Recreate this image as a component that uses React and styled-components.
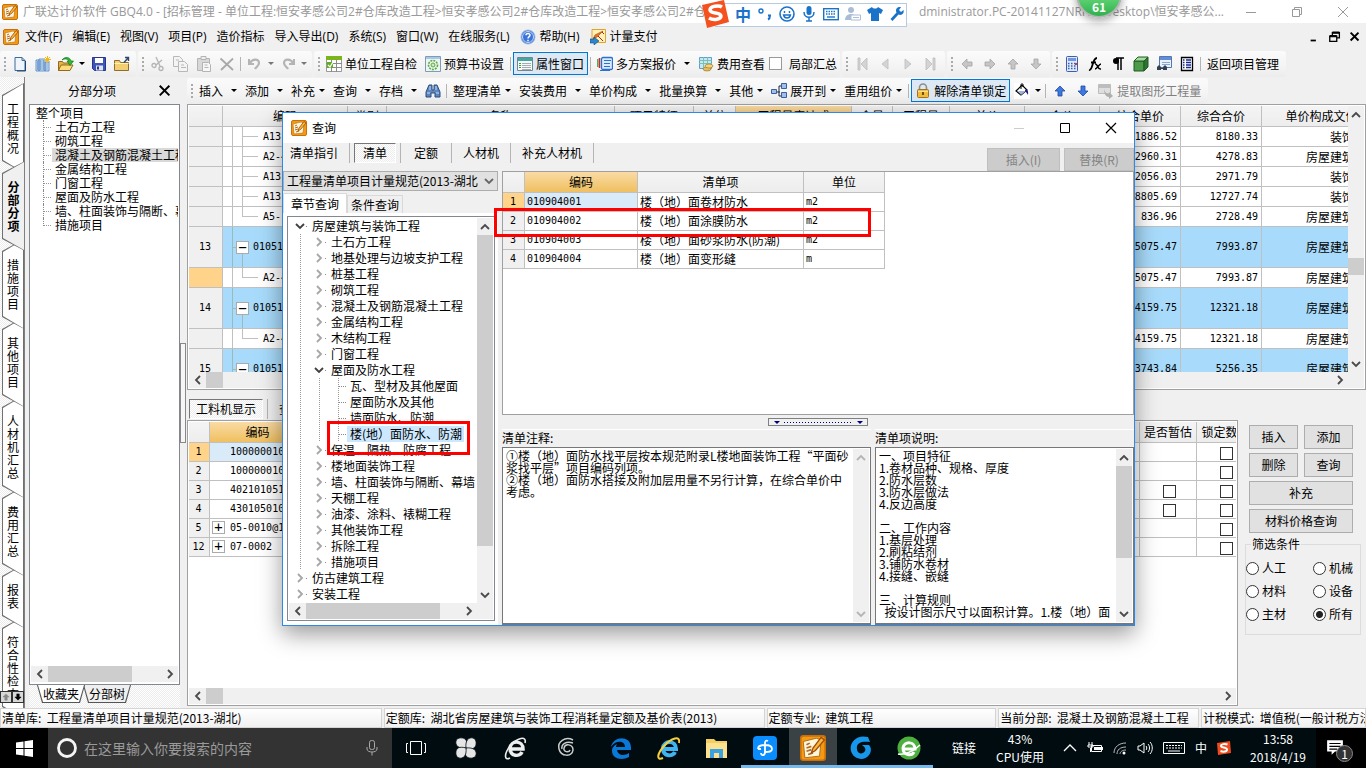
import React, { useState } from "react";
import styled, { createGlobalStyle, css } from "styled-components";

const I = ({ s = 16, children, ...rest }) => (
  <svg width={s} height={s} viewBox="0 0 16 16" fill="none" aria-hidden="true" {...rest}>
    {children}
  </svg>
);

const BookIcon = ({ s }) => (
  <I s={s}>
    <rect x=".5" y=".5" width="15" height="15" rx="1.5" fill="#f39a12" stroke="#c9700a" />
    <path d="M2 4 10 2l3 1-1 10-9 1z" fill="#fff6dc" stroke="#b56a1a" strokeWidth=".6" />
    <path d="M4 6l2-1M4 8l3-1M4 10l3-1M5 12l3-1" stroke="#b06a28" />
    <path d="M13 1.500 8 8l-1 3 2.500-1.500L15 3z" fill="#f5b73a" stroke="#a04a08" strokeWidth=".8" />
  </I>
);
const NewIcon = () => (
  <I>
    <path d="M3 1.500h7l3 3v10H3z" fill="#eef5fc" stroke="#3d6a98" />
    <path d="M10 1.500v3h3" stroke="#3d6a98" />
    <path d="M13.500 5v10H5" stroke="#23466e" />
  </I>
);
const BuildIcon = () => (
  <I>
    <path d="M1 4h3v11H1zM4 3h6v12H4zM10 6h4v9h-4z" fill="#cfe2f7" stroke="#4a7fbe" strokeWidth=".8" />
    <path d="M5.500 4v10M7 4v10M8.500 4v10M2.500 5v9M12 7v7" stroke="#5a8cc6" strokeWidth=".7" />
    <path d="M12.500 0v7M9 3.500h7M10 1l5 5M15 1l-5 5" stroke="#f2b818" />
  </I>
);
const OpenIcon = () => (
  <I>
    <path d="M.5 14.500v-9h4l1 1.500h6v7.500z" fill="#e4b448" stroke="#94681a" />
    <path d="M.5 14.500 3 9h12l-3 5.500z" fill="#fbdc7c" stroke="#94681a" />
    <path d="M4 4c3-4 8-3 9 1h2.500L12 9.500 9 5h2C10 3 7 2 4 4z" fill="#34b934" stroke="#0d7a17" strokeWidth=".7" />
  </I>
);
const SaveIcon = () => (
  <I>
    <path d="M1.500 1.500h13v13h-11l-2-2z" fill="#3f55b8" stroke="#26378a" />
    <path d="M4 2h8v5H4z" fill="#fff" />
    <path d="M5 9.500h7v5H5z" fill="#dde4f4" />
    <path d="M6 10.500h2v3H6z" fill="#26378a" />
  </I>
);
const FolderIcon = () => (
  <I>
    <path d="M.5 14.500v-10h5l1 2h8v8z" fill="#f2cf73" stroke="#8f6d2a" />
    <path d="M.5 7.500h14" stroke="#fff1b8" />
    <path d="M10 6.500 14 2M11 1.500h3.500V5" stroke="#304a6e" strokeWidth="1.400" />
  </I>
);
const CutIcon = () => (
  <I stroke="#b4b4b4" strokeWidth="1.300">
    <path d="M6 1l4 9M12 4 6 9" />
    <circle cx="4" cy="9.500" r="2" />
    <circle cx="11" cy="12.500" r="2" />
  </I>
);
const CopyIcon = () => (
  <I stroke="#b8b8b8">
    <path d="M.5.500h6l3 3v7h-9z" fill="#f4f4f4" />
    <path d="M5.500 5.500h6l3 3v7h-9zM8 9h3M8 11.500h5M3 4h3" fill="#f4f4f4" />
  </I>
);
const PasteIcon = () => (
  <I stroke="#b4b4b4">
    <path d="M1.500 2.500h12v12h-12z" fill="#d8d8d8" />
    <path d="M5 .500h5v3H5z" fill="#eee" />
    <path d="M6.500 6.500h6l2 2v7h-8zM8.500 9h3M8.500 11.500h4" fill="#f7f7f7" />
  </I>
);
const DelIcon = () => (
  <I>
    <path d="M1.500 2.500 14 14M14 2.500 2 14" stroke="#a9a9a9" strokeWidth="1.800" />
  </I>
);
const UndoIcon = ({ flip }) => (
  <I>
    <g transform={flip ? "translate(16 0) scale(-1 1)" : undefined}>
      <path d="M2 3v5h5" stroke="#b4b4b4" strokeWidth="2" />
      <path d="M3 7c2-4 9-5 9 0 0 3-3 4-4 6" stroke="#b4b4b4" strokeWidth="2.200" />
    </g>
  </I>
);
const CheckTableIcon = () => (
  <I>
    <path d="M.5.500h15v15H.5z" fill="#fff" stroke="#999" />
    <path d="M0 0h16v4H0z" fill="#7ab51d" />
    <path d="M0 7.500h16M0 11.500h16M5.500 4v12M10.500 4v12" stroke="#8b8b8b" />
    <path d="M1 6h6v6H1z" fill="#5fae20" />
    <path d="M2 9l2 2 3-5" stroke="#fff" strokeWidth="1.300" />
  </I>
);
const GearIcon = () => (
  <I>
    <path d="M.5.500h15v15H.5z" fill="#eef5ee" stroke="#7c9cba" />
    <path d="M1 1h14v2H1z" fill="#a9c8e8" />
    <circle cx="8" cy="9" r="4.500" stroke="#5aa94a" strokeWidth="1.600" strokeDasharray="2 1" />
    <circle cx="8" cy="9" r="2" fill="#cfe9c8" stroke="#5aa94a" />
  </I>
);
const PropIcon = () => (
  <I>
    <path d="M.5 1.500h15v13H.5z" fill="#f8faf8" stroke="#6d8794" />
    <path d="M1 2h14v3H1z" fill="#43a6a0" />
    <path d="M2 7.500h2M2 9.500h2M2 11.500h2" stroke="#3aa050" />
    <path d="M5 7.500h9M5 9.500h9M5 11.500h9M5 13.500h9" stroke="#a4acb0" />
  </I>
);
const PlanIcon = () => (
  <I>
    <path d="M2.500 2v10" stroke="#d22" strokeWidth="1.500" />
    <path d="M.8 3v8" stroke="#2a9a3a" strokeWidth="1.200" />
    <rect x="4.500" y="1.500" width="11" height="12" rx="1.500" fill="#d8ebff" stroke="#2b72cf" strokeWidth="1.300" />
    <path d="M7 4.500h7M7 7.500h6M7 10.500h6" stroke="#2b72cf" strokeWidth="1.200" />
    <path d="M3 14.500h10" stroke="#2b72cf" />
  </I>
);
const FeeIcon = () => (
  <I>
    <path d="M1.500 1.500h12v11h-12z" fill="#c5e7f8" stroke="#5ba0cf" />
    <path d="M1 4.500h13M1 7.500h13M5.500 1v11M9.500 1v11" stroke="#7cc0b0" />
    <ellipse cx="9" cy="13" rx="4" ry="2" fill="#e6bd5e" stroke="#a57a22" strokeWidth=".7" />
    <ellipse cx="11" cy="10" rx="4" ry="2" fill="#f3d27e" stroke="#a57a22" strokeWidth=".7" />
  </I>
);
const NavIcon = ({ d }) => (
  <I>
    <path d={d} fill="#d4d4d4" stroke="#bcbcbc" strokeWidth=".8" />
  </I>
);
const ArrowIcon = ({ turn = 0, fill = "#c6c6c6", stroke = "#a3a3a3" }) => (
  <I>
    <path
      transform={`rotate(${turn} 8 8)`}
      d="M8 3 13 8h-3v5H6V8H3z"
      fill={fill}
      stroke={stroke}
      strokeWidth=".8"
    />
  </I>
);
const CalcIcon = () => (
  <I>
    <rect x="2.500" y=".5" width="11" height="15" rx="1" fill="#dfe9fa" stroke="#3a5fae" />
    <path d="M4 2h8v3H4z" fill="#6f96de" />
    <path d="M4 7.500h8M4 10h8M4 12.500h8" stroke="#3a5fae" strokeWidth="1.400" strokeDasharray="1.500 1.500" />
    <path d="M11 7h2v2h-2z" fill="#d33" />
  </I>
);
const CubeIcon = () => (
  <I>
    <path d="M1 5h10v10H1z" fill="#4d9a48" stroke="#1e5c22" />
    <path d="M1 5 5 1h10l-4 4z" fill="#a8dba0" stroke="#1e5c22" />
    <path d="M11 5l4-4v10l-4 4z" fill="#2f7432" stroke="#1e5c22" />
  </I>
);
const FindTableIcon = () => (
  <I>
    <path d="M3.500.500h12v11h-12z" fill="#e8f1fc" stroke="#5577aa" />
    <path d="M4 1h11v3H4z" fill="#5f8edb" />
    <path d="M6 6.500h8M6 8.500h8" stroke="#8aa7cf" />
    <path d="M1 11l2-2 2 2v3H1zM7 11l2-2 2 2v3H7z" fill="#33404f" />
    <path d="M4 12.500h4" stroke="#33404f" />
  </I>
);
const ListIcon = () => (
  <I>
    <path d="M2.500 1.500h11v13h-11z" fill="#fff" stroke="#000" strokeWidth="1.300" />
    <path d="M4 4h1.500M4 6.500h1.500M4 9h1.500M4 11.500h1.500M7 4h5M7 6.500h5M7 9h5M7 11.500h5" stroke="#1b2a8f" strokeWidth="1.300" />
  </I>
);
const BinocIcon = () => (
  <I>
    <path d="M1 9 4 2h3v5h2V2h3l3 7v5h-5v-4H6v4H1z" fill="#5c86bd" stroke="#2a4d7e" />
    <path d="M2 10h3M11 10h3M5 3v4M11 3v4" stroke="#c7dcf5" />
  </I>
);
const ExpandIcon = () => (
  <I>
    <path d="M4 9h5M8 3v10M8 3h3M8 13h3" stroke="#223" />
    <path d="M.5 6.500h5v4h-5zM10.500.500h5v5h-5zM10.500 9.500h5v5h-5z" fill="#9fc0ea" stroke="#3a5f9c" />
  </I>
);
const LockIcon = () => (
  <I>
    <path d="M4.500 7V4.500a3.500 3.500 0 0 1 7 0V7" stroke="#8d8d8d" strokeWidth="1.600" />
    <rect x="2.500" y="6.500" width="11" height="8" rx="1" fill="#f2bd3f" stroke="#a8721a" />
    <path d="M3 8.500h10" stroke="#fbe29a" />
    <path d="M8 9v3" stroke="#4d3508" strokeWidth="1.600" />
  </I>
);
const BucketIcon = () => (
  <I>
    <path d="M0 0h16v16H0z" fill="#fff" />
    <path d="M2 8l6-6 5 5-6 5z" fill="#fff" stroke="#000" strokeWidth="1.200" />
    <path d="M4 8h8l-5 4z" fill="#9bb4d9" />
    <path d="M7 6V1.500c0-1 2-1 2 0V4" stroke="#000" />
    <path d="M12 6c2 1 2.500 3 2 6-1-2-2-3-3-4z" fill="#1b1b7a" />
  </I>
);
const ExtractIcon = () => (
  <I>
    <path d="M.5 1.500h12v9H.5z" fill="#dedede" stroke="#bdbdbd" />
    <path d="M1 2h11v3H1z" fill="#bdbdbd" />
    <path d="M6 6c1 4 3 5 5 5V9l4 4-4 3v-2c-3 0-5-3-5-8z" fill="#b0b0b0" />
  </I>
);
const HelpIcon = () => (
  <I>
    <circle cx="8" cy="8" r="7" fill="#3b74d8" stroke="#9db8e6" />
    <circle cx="8" cy="8" r="5.500" stroke="#e3edff" strokeWidth=".8" />
    <path d="M6 6.300C6 3.800 10.200 4 10 6.300 9.900 7.600 8 7.700 8 9.500M8 10.800v1.400" stroke="#fff" strokeWidth="1.500" />
  </I>
);
const PayIcon = () => (
  <I>
    <path d="M2 .500h13.500v13H2z" fill="#fff0b8" stroke="#e2a32a" />
    <path d="M13 2 7 8l-4 2 2-4z" fill="#e87722" stroke="#a63d0a" strokeWidth=".6" />
    <path d="M8 7l5 5M12 3l2 2" stroke="#b0261a" />
    <path d="M0 10h4V8l5 4-5 4v-2H0z" fill="#2b86cf" stroke="#0d4d86" strokeWidth=".6" />
  </I>
);
const Chevron = ({ dir = "right", color = "#4a4a4a" }) => {
  const turn = { right: 0, down: 90, left: 180, up: 270 }[dir];
  return (
    <svg width="10" height="10" viewBox="0 0 10 10" fill="none" aria-hidden="true">
      <path d="M3 1 7 5 3 9" transform={`rotate(${turn} 5 5)`} stroke={color} strokeWidth="1.800" />
    </svg>
  );
};

const menus = [
  { label: "文件(F)" },
  { label: "编辑(E)" },
  { label: "视图(V)" },
  { label: "项目(P)" },
  { label: "造价指标" },
  { label: "导入导出(D)" },
  { label: "系统(S)" },
  { label: "窗口(W)" },
  { label: "在线服务(L)" },
  { label: "帮助(H)", icon: <HelpIcon /> },
  { label: "计量支付", icon: <PayIcon /> },
];

const sideTabs = ["工程概况", "分部分项", "措施项目", "其他项目", "人材机汇总", "费用汇总", "报表", "符合性检查"];

const parts = [
  "土石方工程",
  "砌筑工程",
  "混凝土及钢筋混凝土工程",
  "金属结构工程",
  "门窗工程",
  "屋面及防水工程",
  "墙、柱面装饰与隔断、幕墙",
  "措施项目",
];

const mainCols = [
  ["编码", 125],
  ["类别", 39],
  ["名称", 228],
  ["项目特征", 79],
  ["单位", 42],
  ["工程量表达式", 116],
  ["含量", 41],
  ["工程量", 57],
  ["单价", 75],
  ["合价", 75],
  ["综合单价", 81],
  ["综合合价", 81],
  ["单价构成文件", 120],
];

const mainRows = [
  { code: "A13-1", price: "1886.52", total: "8180.33", file: "装饰工程" },
  { code: "A2-4", price: "2960.31", total: "4278.83", file: "房屋建筑工程" },
  { code: "A13-1", price: "2056.03", total: "2971.79", file: "装饰工程" },
  { code: "A13-1", price: "8805.69", total: "12727.74", file: "装饰工程" },
  { code: "A5-", price: "836.96", total: "2728.49", file: "房屋建筑工程", last: true },
  { no: 13, code: "010514", price: "5075.47", total: "7993.87", file: "房屋建筑工程" },
  { code: "A2-4", price: "5075.47", total: "7993.87", file: "房屋建筑工程", last: true, current: true },
  { no: 14, code: "010515", price: "4159.75", total: "12321.18", file: "房屋建筑工程" },
  { code: "A2-4", price: "4159.75", total: "12321.18", file: "房屋建筑工程", last: true },
  { no: 15, code: "010515", price: "3743.84", total: "5256.35", file: "房屋建筑工程" },
];

const resRows = [
  { no: 1, code: "100000010" },
  { no: 2, code: "100000010" },
  { no: 3, code: "402101051", est: true },
  { no: 4, code: "430105010", est: true },
  { no: 5, code: "05-0010@1", plus: true },
  { no: 12, code: "07-0002", plus: true },
];

const chapters = [
  [0, "房屋建筑与装饰工程", "open"],
  [1, "土石方工程"],
  [1, "地基处理与边坡支护工程"],
  [1, "桩基工程"],
  [1, "砌筑工程"],
  [1, "混凝土及钢筋混凝土工程"],
  [1, "金属结构工程"],
  [1, "木结构工程"],
  [1, "门窗工程"],
  [1, "屋面及防水工程", "open"],
  [2, "瓦、型材及其他屋面"],
  [2, "屋面防水及其他"],
  [2, "墙面防水、防潮"],
  [2, "楼(地）面防水、防潮"],
  [1, "保温、隔热、防腐工程"],
  [1, "楼地面装饰工程"],
  [1, "墙、柱面装饰与隔断、幕墙"],
  [1, "天棚工程"],
  [1, "油漆、涂料、裱糊工程"],
  [1, "其他装饰工程"],
  [1, "拆除工程"],
  [1, "措施项目"],
  [0, "仿古建筑工程"],
  [0, "安装工程"],
];

const items = [
  ["010904001", "楼（地）面卷材防水", "m2"],
  ["010904002", "楼（地）面涂膜防水", "m2"],
  ["010904003", "楼（地）面砂浆防水(防潮)", "m2"],
  ["010904004", "楼（地）面变形缝", "m"],
];

const noteText = `①楼（地）面防水找平层按本规范附录L楼地面装饰工程“平面砂浆找平层”项目编码列项。
②楼（地）面防水搭接及附加层用量不另行计算，在综合单价中考虑。`;

const descText = `一、项目特征
1.卷材品种、规格、厚度
2.防水层数
3.防水层做法
4.反边高度

二、工作内容
1.基层处理
2.刷粘结剂
3.铺防水卷材
4.接缝、嵌缝

三、计算规则
  按设计图示尺寸以面积计算。1.楼（地）面`;

const Scroll = ({ vertical, at = 0, len, idle }) => {
  const color = idle ? "#b5b5b5" : "#4a4a4a";
  return (
    <ScrollBar $vertical={vertical}>
      <ScrollEnd $vertical={vertical}>
        <Chevron dir={vertical ? "up" : "left"} color={color} />
      </ScrollEnd>
      <Track $vertical={vertical}>{len && <Thumb $vertical={vertical} $at={at} $len={len} />}</Track>
      <ScrollEnd $vertical={vertical}>
        <Chevron dir={vertical ? "down" : "right"} color={color} />
      </ScrollEnd>
    </ScrollBar>
  );
};

const Tool = ({ icon, label }) => (
  <ToolButton type="button" aria-label={label}>
    {icon}
  </ToolButton>
);

const MenuTool = ({ label, split, icon }) => (
  <DropButton type="button" $split={split}>
    {icon}
    {label}
    <Caret />
  </DropButton>
);

const TopBars = () => (
  <header>
    <TitleBar>
      <BookIcon />
      <TitleText>
        广联达计价软件 GBQ4.0 - [招标管理 - 单位工程:恒安孝感公司2#仓库改造工程&gt;恒安孝感公司2#仓库改造工程&gt;恒安孝感公司2#仓库
      </TitleText>
      <TitlePath>dministrator.PC-20141127NRHD\Desktop\恒安孝感公...</TitlePath>
      <WinButton type="button" aria-label="最小化">
        <I><path d="M3 8.500h10" stroke="#999" /></I>
      </WinButton>
      <WinButton type="button" aria-label="还原">
        <I><path d="M3.500 5.500h7v7h-7zM5.500 5V3.500h7v7H11" stroke="#999" /></I>
      </WinButton>
      <WinButton type="button" aria-label="关闭">
        <I><path d="M3 3l10 10M13 3 3 13" stroke="#999" /></I>
      </WinButton>
    </TitleBar>
    <MenuBar>
      <BookIcon />
      {menus.map((m) => (
        <MenuItem key={m.label} type="button">
          {m.icon}
          {m.label}
        </MenuItem>
      ))}
      <Grow />
      <MdiButtons>
        <I s={14}><path d="M3 11h6v2H3z" fill="#000" /></I>
        <I s={14}><path d="M2 7h8v6H2zM5 6V3h8v6h-3" stroke="#000" strokeWidth="1.500" /><path d="M2 7h8M5 3h8" stroke="#000" strokeWidth="2.500" /></I>
        <I s={14}><path d="M3 3l9 9M12 3l-9 9" stroke="#000" strokeWidth="2.200" /></I>
      </MdiButtons>
    </MenuBar>
    <ToolBar>
      <Group>
        <Grip />
        <Tool icon={<NewIcon />} label="新建" />
        <Tool icon={<BuildIcon />} label="新建项目" />
        <Tool icon={<OpenIcon />} label="打开" />
        <CaretBox><Caret /></CaretBox>
        <Tool icon={<SaveIcon />} label="保存" />
        <Tool icon={<FolderIcon />} label="另存" />
      </Group>
      <Group>
        <Grip />
        <Tool icon={<CutIcon />} label="剪切" />
        <Tool icon={<CopyIcon />} label="复制" />
        <Tool icon={<PasteIcon />} label="粘贴" />
        <Tool icon={<DelIcon />} label="删除" />
        <Sep />
        <Tool icon={<UndoIcon />} label="撤销" />
        <CaretBox><Caret $dim /></CaretBox>
        <Tool icon={<UndoIcon flip />} label="恢复" />
        <CaretBox><Caret $dim /></CaretBox>
      </Group>
      <Group>
        <Grip />
        <TextButton type="button"><CheckTableIcon />单位工程自检</TextButton>
        <TextButton type="button"><GearIcon />预算书设置</TextButton>
        <Sep />
        <TextButton type="button" $pressed><PropIcon />属性窗口</TextButton>
        <Sep />
        <DropButton type="button" $split><PlanIcon />多方案报价<Caret /></DropButton>
        <TextButton type="button"><FeeIcon />费用查看</TextButton>
        <CheckLabel>
          <Check type="checkbox" $pale />
          局部汇总
        </CheckLabel>
      </Group>
      <Group>
        <Grip />
        <Tool label="首条" icon={<NavIcon d="M4 2h2v12H4zM13 2v12L7 8z" />} />
        <Tool label="上一条" icon={<NavIcon d="M11 3v10L5 8z" />} />
        <Tool label="下一条" icon={<NavIcon d="M5 3v10l6-5z" />} />
        <Tool label="末条" icon={<NavIcon d="M10 2h2v12h-2zM3 2v12l6-6z" />} />
      </Group>
      <Group>
        <Grip />
        <Tool label="左移" icon={<ArrowIcon turn={-90} />} />
        <Tool label="右移" icon={<ArrowIcon turn={90} />} />
        <Tool label="上移" icon={<ArrowIcon />} />
        <Tool label="下移" icon={<ArrowIcon turn={180} />} />
      </Group>
      <Group>
        <Grip />
        <Tool label="计算器" icon={<CalcIcon />} />
        <Tool
          label="函数"
          icon={<I><path d="M2 14c4 1 3-12 8-12M4 6.500h5" stroke="#000" strokeWidth="1.800" /><path d="M8 8c3-1 2 6 6 5M14 8c-2 0-4 5-6 5" stroke="#000" strokeWidth="1.500" /></I>}
        />
        <Tool
          label="特殊符号"
          icon={<I><path d="M8 2v12M11 2v12M6 2h8" stroke="#000" strokeWidth="1.500" /><circle cx="6" cy="5" r="3" fill="#000" /></I>}
        />
        <Tool label="图元" icon={<CubeIcon />} />
        <Tool label="查找" icon={<FindTableIcon />} />
        <Tool label="列表" icon={<ListIcon />} />
        <Sep />
        <TextButton type="button">返回项目管理</TextButton>
      </Group>
    </ToolBar>
  </header>
);

const MainGrid = () => (
  <GridFrame $tall>
    <GridView>
      <Table>
        <colgroup>
          <col width="34" />
          {mainCols.map(([name, w]) => (
            <col key={name} width={w} />
          ))}
        </colgroup>
        <thead>
          <tr>
            <Th />
            {mainCols.map(([name]) => (
              <Th key={name} $hot={name === "工程量表达式"}>{name}</Th>
            ))}
          </tr>
        </thead>
        <tbody>
          {mainRows.map((r, i) => (
            <Tr key={i} $blue={r.no} $h={r.no ? 41 : 20}>
              <RowHead $hot={r.current}>{r.no}</RowHead>
              {r.no ? (
                <ParentCell>
                  <Toggle>−</Toggle>
                  {r.code}
                </ParentCell>
              ) : (
                <LeafCell $last={r.last}>{r.code}</LeafCell>
              )}
              {mainCols.slice(1, 10).map(([name]) => (
                <Td key={name} />
              ))}
              <NumCell>{r.price}</NumCell>
              <NumCell>{r.total}</NumCell>
              <Td $right>{r.file}</Td>
            </Tr>
          ))}
        </tbody>
      </Table>
    </GridView>
    <Scroll vertical at={135} len={17} />
    <Scroll at={0} len={17} />
    <Corner />
  </GridFrame>
);

const ResourceGrid = () => (
  <GridFrame>
    <GridView>
      <Table>
        <colgroup>
          <col width="21" />
          <col width="96" />
          <col width="834" />
          <col width="57" />
          <col width="58" />
        </colgroup>
        <thead>
          <tr>
            <Th />
            <Th $hot>编码</Th>
            <Th />
            <Th>是否暂估</Th>
            <Th>锁定数量</Th>
          </tr>
        </thead>
        <tbody>
          {resRows.map((r) => (
            <Tr key={r.no} $h={19}>
              <RowHead $hot={r.no === 1}>{r.no}</RowHead>
              <CodeCell $hot={r.no === 1}>
                <CodeLine>
                  <ToggleSlot>{r.plus && <Toggle>+</Toggle>}</ToggleSlot>
                  {r.code}
                </CodeLine>
              </CodeCell>
              <Td />
              <Td $center>{r.est && <Check type="checkbox" aria-label="是否暂估" />}</Td>
              <Td $center><Check type="checkbox" aria-label="锁定数量" /></Td>
            </Tr>
          ))}
        </tbody>
      </Table>
    </GridView>
    <HSpan><Scroll at={0} len={17} /></HSpan>
  </GridFrame>
);

const FilterBox = () => {
  const [kind, setKind] = useState("所有");
  return (
    <Fieldset>
      <legend>筛选条件</legend>
      {["人工", "机械", "材料", "设备", "主材", "所有"].map((k) => (
        <RadioLabel key={k}>
          <Radio type="radio" name="kind" checked={kind === k} onChange={() => setKind(k)} />
          {k}
        </RadioLabel>
      ))}
    </Fieldset>
  );
};

const QueryDialog = () => (
  <Dialog role="dialog" aria-label="查询">
    <DialogTitle>
      <BookIcon />
      <span>查询</span>
      <Grow />
      <WinButton type="button" aria-label="最小化">
        <I><path d="M3 8.500h10" stroke="#ccc" /></I>
      </WinButton>
      <WinButton type="button" aria-label="最大化">
        <I><path d="M3.500 3.500h9v9h-9z" stroke="#000" /></I>
      </WinButton>
      <WinButton type="button" aria-label="关闭">
        <I><path d="M3 3l10 10M13 3 3 13" stroke="#000" strokeWidth="1.200" /></I>
      </WinButton>
    </DialogTitle>
    <DialogBar>
      {["清单指引", "清单", "定额", "人材机", "补充人材机"].map((t) => (
        <React.Fragment key={t}>
          <ModeButton type="button" $pressed={t === "清单"}>{t}</ModeButton>
          <Sep $tall />
        </React.Fragment>
      ))}
      <Grow />
      <GreyButton type="button" disabled>插入(I)</GreyButton>
      <GreyButton type="button" disabled>替换(R)</GreyButton>
    </DialogBar>
    <DialogBody>
      <DialogLeft>
        <SelectWrap>
          <Select aria-label="清单规范" defaultValue="hb">
            <option value="hb">工程量清单项目计量规范(2013-湖北</option>
          </Select>
          <Chevron dir="down" color="#666" />
        </SelectWrap>
        <PageTabs>
          <PageTab type="button" $active>章节查询</PageTab>
          <PageTab type="button">条件查询</PageTab>
        </PageTabs>
        <TreePage>
          <TreeFrame>
            <ChapterList>
              {chapters.map(([level, name, state]) => (
                <Chapter key={name} $level={level}>
                  {level < 2 && (
                    <Chevron dir={state ? "down" : "right"} color={state ? "#404040" : "#a6a6a6"} />
                  )}
                  <Dots $leaf={level === 2} />
                  <ChapterName $active={name === chapters[13][1]}>{name}</ChapterName>
                </Chapter>
              ))}
            </ChapterList>
            <Scroll vertical at={0} len={311} />
            <Scroll at={0} len={134} />
            <Corner />
          </TreeFrame>
        </TreePage>
      </DialogLeft>
      <DialogRight>
        <ItemArea>
          <Table>
            <colgroup>
              <col width="22" />
              <col width="113" />
              <col width="166" />
              <col width="81" />
            </colgroup>
            <thead>
              <tr>
                <Th />
                <Th $hot>编码</Th>
                <Th>清单项</Th>
                <Th>单位</Th>
              </tr>
            </thead>
            <tbody>
              {items.map(([code, name, unit], i) => (
                <Tr key={code} $h={19}>
                  <RowHead $hot={i === 0}>{i + 1}</RowHead>
                  <CodeCell $hot={i === 0}>{code}</CodeCell>
                  <Td>{name}</Td>
                  <CodeCell>{unit}</CodeCell>
                </Tr>
              ))}
            </tbody>
          </Table>
        </ItemArea>
        <HSplit>
          <HHandle><i /><b /><i /></HHandle>
        </HSplit>
        <NoteRow>
          <NoteCol $wide>
            <label htmlFor="note">清单注释:</label>
            <NoteBox>
              <Note id="note" readOnly defaultValue={noteText} />
              <Scroll vertical idle />
            </NoteBox>
          </NoteCol>
          <NoteCol>
            <label htmlFor="desc">清单项说明:</label>
            <NoteBox>
              <Note id="desc" readOnly $pre defaultValue={descText} />
              <Scroll vertical at={0} len={92} />
            </NoteBox>
          </NoteCol>
        </NoteRow>
      </DialogRight>
    </DialogBody>
    <MarkTree />
    <MarkRow />
  </Dialog>
);

const ImeBar = () => (
  <Ime>
    <svg width="28" height="28" viewBox="0 0 28 28" aria-hidden="true">
      <path d="M1 5 23 0l5 22-22 6z" fill="#f4511e" />
      <path d="M21 7c-3-2-12-1-12 3 0 4 11 2 11 6 0 3-7 5-12 2" fill="none" stroke="#fff" strokeWidth="3.500" />
    </svg>
    <strong>中</strong>
    <I><circle cx="4" cy="5" r="2" stroke="#1b73c9" strokeWidth="1.400" /><path d="M11 9.500h2c0 2 0 3-2 4" stroke="#1b73c9" strokeWidth="2" /></I>
    <I><circle cx="8" cy="8" r="7" stroke="#1b73c9" strokeWidth="1.600" /><path d="M5.500 5v2M10.500 5v2M4.500 9c1 4 6 4 7 0z" stroke="#1b73c9" strokeWidth="1.400" /></I>
    <I><rect x="5.500" y="0" width="5" height="9" rx="2.500" fill="#1b73c9" /><path d="M3 6c0 7 10 7 10 0M8 11v4M5 15h6" stroke="#1b73c9" strokeWidth="1.500" /></I>
    <I><rect x=".7" y="2.700" width="14.600" height="11" stroke="#1b73c9" strokeWidth="1.400" /><path d="M3 5.500h10M3 8h10" stroke="#1b73c9" strokeWidth="1.400" strokeDasharray="1.500 1" /><path d="M4 11h8" stroke="#1b73c9" strokeWidth="1.400" /></I>
    <I><circle cx="6" cy="4" r="3" fill="#a9bdd6" /><path d="M0 14c0-8 12-8 12 0z" fill="#a9bdd6" /><path d="M6 9h9.500v5H6z" fill="#fff" stroke="#a9bdd6" /><path d="M8 11.500h6" stroke="#a9bdd6" /></I>
    <I><path d="M5 1c1 2 5 2 6 0l5 3-2 4-2-1v8H4V7L2 8 0 4z" fill="#1b73c9" /></I>
    <I><path d="M14.500 4 12 6l-2-2 2-2.800C8 .500 6 3.500 7.500 6.500L1.500 13l2 2 6-6.500c3 1.500 6-1 5-4.500z" fill="#1b73c9" /></I>
  </Ime>
);

const G = ({ children }) => (
  <svg width="26" height="26" viewBox="0 0 26 26" fill="none" aria-hidden="true">
    {children}
  </svg>
);

const TaskBar = () => (
  <Tasks>
    <StartButton type="button" aria-label="开始">
      <svg width="17" height="17" viewBox="0 0 17 17" fill="#fff" aria-hidden="true">
        <path d="M0 2.500 7.500 1.400V8H0zM8.500 1.200 17 0v8H8.500zM0 9h7.500v6.600L0 14.500zM8.500 9H17v8l-8.500-1.200z" />
      </svg>
    </StartButton>
    <Search>
      <svg width="22" height="22" viewBox="0 0 22 22" fill="none" aria-hidden="true">
        <circle cx="11" cy="11" r="8.500" stroke="#f5f5f5" strokeWidth="2.800" />
      </svg>
      <input aria-label="搜索" placeholder="在这里输入你要搜索的内容" />
      <I><rect x="5.500" y=".5" width="5" height="9" rx="2" stroke="#aaa" /><path d="M3 7v2c0 4 10 4 10 0V7M8 12v3.500" stroke="#aaa" /></I>
    </Search>
    <TaskGroup $loose>
      <Task type="button" aria-label="任务视图">
        <G><path d="M7.500 6.500h11v13h-11zM5 8.500H3.500v9H5M21 8.500h1.500v9H21" stroke="#fff" /></G>
      </Task>
      <Task type="button" aria-label="花瓣">
        <G>
          <g fill="#e6e6e6" stroke="#000c10" strokeWidth=".8">
            <path d="M13 13C5 14 2 10 3 6c1-4 8-4 10-1 1 2 1 5 0 8z" />
            <path d="M13 13C12 5 16 2 20 3c4 1 4 8 1 10-2 1-5 1-8 0z" />
            <path d="M13 13c8-1 11 3 10 7-1 4-8 4-10 1-1-2-1-5 0-8z" />
            <path d="M13 13c1 8-3 11-7 10-4-1-4-8-1-10 2-1 5-1 8 0z" />
          </g>
        </G>
      </Task>
      <Task type="button" aria-label="浏览器">
        <G>
          <path d="M7 14h13c0-9-12-9-13-1 0 9 10 9 12 4" stroke="#eee" strokeWidth="3.500" />
          <path d="M22 8c2-8-8-5-15 3C1 19 1 26 7 23" stroke="#eee" strokeWidth="1.600" />
        </G>
      </Task>
      <Task type="button" aria-label="螺旋">
        <G>
          <path d="M20 5c-8-4-16 2-14 9 2 8 13 8 14 1 0-6-8-7-9-2-1 4 5 5 6 2M20 8c-7-2-12 1-11 6" stroke="#ccc" strokeWidth="1.500" />
        </G>
      </Task>
    </TaskGroup>
    <TaskGroup>
      <Task type="button" aria-label="Edge">
        <G><path d="M3 12C5 1 22 0 23 12v3H9c1 6 8 6 12 3v4C14 26 4 24 4 16c0-4 3-6 5-7-1 2-1 3-1 3h9c0-7-10-7-14 0z" fill="#0a78d7" /></G>
      </Task>
      <Task type="button" aria-label="Internet Explorer">
        <G>
          <path d="M7 14h13c0-9-12-9-13-1 0 9 10 9 12 4" stroke="#3fb4f0" strokeWidth="4" />
          <path d="M23 8c2-8-8-5-15 3C1 19 0 26 7 23" stroke="#f7cf3c" strokeWidth="2" />
        </G>
      </Task>
      <Task type="button" aria-label="文件资源管理器">
        <G>
          <path d="M2 4h8l2 2h11v17H2z" fill="#f5ce62" />
          <path d="M2 8h21v15H2z" fill="#fde18f" />
          <path d="M6 23v-9h13v9h-4v-5h-5v5z" fill="#3ba2e0" />
        </G>
      </Task>
      <Task type="button" aria-label="云" $open>
        <G>
          <rect x="1" y="1" width="24" height="24" rx="4" fill="#0a8dff" />
          <path d="M16 6c-2-1-3 0-3 2v9c0 4-4 4-4 1M6 14c0-3 3-4 7-4 4 0 7 1 7 4s-3 3-7 3M6 14h3" stroke="#fff" strokeWidth="1.800" />
        </G>
      </Task>
      <Task type="button" aria-label="计价软件" $open $active>
        <BookIcon s={26} />
      </Task>
      <Task type="button" aria-label="广联达" $open>
        <G>
          <path d="M20 2C8-1 1 8 3 16c2 8 13 11 18 4 3-4 2-8 0-10h-7c3 2 4 4 3 6-2 4-8 3-8-2C8 8 13 6 22 7z" fill="#1797ea" />
        </G>
      </Task>
      <Task type="button" aria-label="安全浏览器" $open>
        <G>
          <circle cx="13" cy="13" r="11.500" fill="#4caf3e" />
          <path d="M7 14h12c0-8-11-8-12-1 0 8 9 8 11 4" stroke="#fff" strokeWidth="3" />
          <path d="M2 19c6 1 15-2 22-9" stroke="#fff" strokeWidth="1.500" />
        </G>
      </Task>
    </TaskGroup>
    <Grow />
    <TrayText>链接</TrayText>
    <TrayText $two>43%<br />CPU使用</TrayText>
    <Tray>
      <I><path d="M2 11l6-6 6 6" stroke="#fff" strokeWidth="1.300" /></I>
      <I><path d="M4.500 5.500h10v6h-10zM15.500 7v3M2 2v3M5 2v3M1 5h5v2H1zM3.500 8v4" stroke="#fff" /><path d="M7 7h7v3H7z" fill="#fff" /></I>
      <I><path d="M2 13C2 7 7 3 14 3M5 14c0-4 3-7 9-7M8 14c0-2 2-4 6-4" stroke="#bbb" /><circle cx="12" cy="13" r="1.500" fill="#fff" /></I>
      <I><path d="M1 6h2l4-3v10l-4-3H1zM9 6c1 1 1 3 0 4M11 4c2 2 2 6 0 8M13 2c3 3 3 9 0 12" stroke="#fff" /></I>
      <svg width="24" height="16" viewBox="0 0 24 16" fill="none" aria-hidden="true">
        <path d="M1.500 2.500h21v11h-21z" stroke="#fff" />
        <path d="M4 5.500h16M4 8h16" stroke="#fff" strokeDasharray="2 1" />
        <path d="M6 11h12" stroke="#fff" />
      </svg>
      <span>中</span>
      <I><path d="M1 3 14 1l1 12-13 2z" fill="#f04a1c" /><path d="M11.500 4.500C9 3.500 5 4 5 6s6 1 6 3.500-4 2.500-6.500 1.500" stroke="#fff" strokeWidth="2" /></I>
    </Tray>
    <TrayText $clock>13:58<br />2018/4/19</TrayText>
    <Notice>
      <I s={18}><path d="M1 1h14v10H8l-3 3v-3H1z" fill="#fff" /><path d="M3 4h10M3 6.500h10M3 9h7" stroke="#000" /></I>
      <em>1</em>
    </Notice>
  </Tasks>
);

export default function App() {
  const [tab, setTab] = useState("分部分项");
  return (
    <>
      <Global />
      <Page>
        <TopBars />
        <Work>
          <SideTabs>
            {sideTabs.map((t, i) => (
              <SideTab key={t} type="button" $z={20 - i} $active={t === tab} onClick={() => setTab(t)}>
                <span>{t}</span>
              </SideTab>
            ))}
            <TabSpin>
              <button type="button" aria-label="向上"><ArrowIcon fill="#888" stroke="#888" /></button>
              <button type="button" aria-label="向下"><ArrowIcon turn={180} fill="#000" stroke="#000" /></button>
            </TabSpin>
          </SideTabs>
          <LeftPanel>
            <PanelTitle>
              <span>分部分项</span>
              <button type="button" aria-label="关闭">
                <I s={14}><path d="M2 2l11 11M13 2 2 13" stroke="#000" strokeWidth="2.200" /></I>
              </button>
            </PanelTitle>
            <PartFrame>
              <PartList>
                <li>整个项目</li>
                {parts.map((p) => (
                  <Part key={p}>
                    <PartName $active={p === parts[2]}>{p}</PartName>
                  </Part>
                ))}
              </PartList>
              <Scroll at={0} len={84} />
            </PartFrame>
            <BottomTabs>
              <BottomTab type="button"><span>收藏夹</span></BottomTab>
              <BottomTab type="button" $active><span>分部树</span></BottomTab>
            </BottomTabs>
          </LeftPanel>
          <VSplit><VHandle /></VSplit>
          <Center>
            <ToolBar>
              <Group>
                <Grip />
                <MenuTool label="插入" split />
                <MenuTool label="添加" split />
                <MenuTool label="补充" />
                <MenuTool label="查询" split />
                <MenuTool label="存档" split />
                <Tool icon={<BinocIcon />} label="查找" />
                <Sep />
                <MenuTool label="整理清单" />
                <MenuTool label="安装费用" split />
                <MenuTool label="单价构成" split />
                <MenuTool label="批量换算" split />
                <MenuTool label="其他" />
                <MenuTool label="展开到" icon={<ExpandIcon />} />
                <MenuTool label="重用组价" />
                <Sep />
                <TextButton type="button" $pressed><LockIcon />解除清单锁定</TextButton>
                <Tool icon={<BucketIcon />} label="颜色" />
                <CaretBox><Caret /></CaretBox>
                <Sep />
                <Tool label="上移" icon={<ArrowIcon fill="#3f78e0" stroke="#1f4aa0" />} />
                <Tool label="下移" icon={<ArrowIcon turn={180} fill="#3f78e0" stroke="#1f4aa0" />} />
                <TextButton type="button" disabled><ExtractIcon />提取图形工程量</TextButton>
              </Group>
            </ToolBar>
            <MainGrid />
            <LowerBar>
              <ModeButton type="button" $pressed>工料机显示</ModeButton>
              <Sep $tall />
              <ModeButton type="button">查看单价构成</ModeButton>
            </LowerBar>
            <Lower>
              <ResourceGrid />
              <Actions>
                <ButtonGrid>
                  <PushButton type="button">插入</PushButton>
                  <PushButton type="button">添加</PushButton>
                  <PushButton type="button">删除</PushButton>
                  <PushButton type="button">查询</PushButton>
                  <PushButton type="button" $wide>补充</PushButton>
                  <PushButton type="button" $wide>材料价格查询</PushButton>
                </ButtonGrid>
                <FilterBox />
              </Actions>
            </Lower>
          </Center>
        </Work>
        <StatusBar>
          <span>清单库: &nbsp;工程量清单项目计量规范(2013-湖北)</span>
          <span>定额库: &nbsp;湖北省房屋建筑与装饰工程消耗量定额及基价表(2013)</span>
          <span>定额专业: &nbsp;建筑工程</span>
          <span>当前分部: &nbsp;混凝土及钢筋混凝土工程</span>
          <span>计税模式: &nbsp;增值税(一般计税方法)</span>
        </StatusBar>
        <TaskBar />
        <QueryDialog />
        <ImeBar />
        <Ball>61</Ball>
      </Page>
    </>
  );
}

const mono = css`
  font-family: "DejaVu Sans Mono", "Noto Sans CJK SC", monospace;
  font-size: 10px;
`;
const uiFont = css`
  font-family: "Open Sans", "Noto Sans CJK SC", sans-serif;
`;
const line = "#c0c0c0";
const dither = css`
  background: repeating-conic-gradient(#ececec 0 25%, #fff 0 50%) 0 0 / 2px 2px;
`;

const Global = createGlobalStyle`
  * {
    box-sizing: border-box;
  }
  body {
    margin: 0;
    background: #f0f0f0;
    overflow: hidden;
  }
  body, button, input, select, textarea {
    font-family: "Noto Sans CJK SC", "Liberation Sans", sans-serif;
    font-size: 12px;
    line-height: 14px;
    color: #000;
  }
  button {
    padding: 0;
    border: none;
    background: none;
    white-space: nowrap;
  }
  svg {
    flex: none;
    display: block;
  }
`;
const Page = styled.div`
  position: relative;
  height: 100vh;
  display: flex;
  flex-direction: column;
  background: #f0f0f0;
`;
const Grow = styled.div`
  flex: 1;
`;
const TitleBar = styled.div`
  height: 23px;
  display: flex;
  align-items: center;
  padding-left: 2px;
  background: #fff;
  color: #999;
  white-space: nowrap;
  ${uiFont}
`;
const TitleText = styled.div`
  flex: 1 1 0;
  min-width: 0;
  overflow: hidden;
  padding-left: 5px;
`;
const TitlePath = styled.div`
  padding: 0 4px;
`;
const WinButton = styled.button`
  width: 46px;
  height: 22px;
  display: flex;
  align-items: center;
  justify-content: center;
`;
const MenuBar = styled.nav`
  height: 27px;
  display: flex;
  align-items: center;
  gap: 10px;
  padding: 0 4px 0 3px;
  > svg {
    margin-right: -4px;
  }
`;
const MenuItem = styled.button`
  display: flex;
  align-items: center;
  gap: 4px;
  ${uiFont}
`;
const MdiButtons = styled.div`
  display: flex;
  gap: 6px;
`;
const ToolBar = styled.div`
  height: 27px;
  display: flex;
  align-items: center;
  gap: 2px;
  overflow: hidden;
`;
const Group = styled.div`
  height: 26px;
  display: flex;
  align-items: center;
  padding-right: 3px;
  border-radius: 3px;
  background: linear-gradient(#fbfbfb, #f4f4f4 60%, #ececec);
`;
const Grip = styled.div`
  width: 2px;
  height: 14px;
  margin: 0 2px 0 4px;
  background: repeating-linear-gradient(#aaa 0 2px, transparent 2px 4px);
`;
const ToolButton = styled.button`
  width: 23px;
  height: 23px;
  display: flex;
  align-items: center;
  justify-content: center;
`;
const Caret = styled.i`
  width: 0;
  border: 3px solid transparent;
  border-bottom: none;
  border-top-color: ${(p) => (p.$dim ? "#777" : "#000")};
`;
const CaretBox = styled.span`
  width: 10px;
  display: flex;
  justify-content: center;
`;
const Sep = styled.i`
  width: 1px;
  height: ${(p) => (p.$tall ? 20 : 14)}px;
  margin: 0 2px;
  background: #b4b4b4;
`;
const TextButton = styled.button`
  height: 23px;
  display: flex;
  align-items: center;
  gap: 3px;
  padding: 0 3px;
  border: 1px solid ${(p) => (p.$pressed ? "#0078d7" : "transparent")};
  background: ${(p) => (p.$pressed ? "#dce9f5" : "none")};
  &:disabled {
    color: #808080;
  }
`;
const DropButton = styled.button`
  display: flex;
  align-items: center;
  padding: 0 4px;
  svg {
    margin-right: 3px;
  }
  ${Caret} {
    margin-left: ${(p) => (p.$split ? 8 : 4)}px;
  }
`;
const CheckLabel = styled.label`
  display: flex;
  align-items: center;
  gap: 7px;
`;
const Check = styled.input`
  appearance: none;
  display: inline-block;
  vertical-align: middle;
  width: 13px;
  height: 13px;
  margin: 0;
  border: 1px solid ${(p) => (p.$pale ? "#999" : "#333")};
  background: #fff;
  &:checked {
    background: #333;
  }
`;
const Work = styled.main`
  flex: 1;
  min-height: 0;
  display: flex;
`;
const SideTabs = styled.div`
  position: relative;
  width: 25px;
  padding: 12px 0 0 2px;
  overflow: hidden;
  border-right: 1px solid #808080;
  ${dither}
`;
const SideTab = styled.button`
  position: relative;
  z-index: ${(p) => (p.$active ? 30 : p.$z)};
  display: block;
  width: ${(p) => (p.$active ? 23 : 22)}px;
  padding: 13px 5px;
  line-height: 13px;
  font-weight: ${(p) => (p.$active ? 700 : 400)};
  white-space: normal;
  word-break: break-all;
  &::before,
  &::after {
    content: "";
    position: absolute;
    inset: -6px 0;
    background: #707070;
    clip-path: polygon(0 12px, 100% 0, 100% 100%, 0 calc(100% - 12px));
  }
  &::after {
    inset: -5px 1px;
    background: ${(p) => (p.$active ? "#f0f0f0" : "#fff")};
  }
  span {
    position: relative;
    z-index: 1;
  }
`;
const TabSpin = styled.div`
  position: absolute;
  z-index: 40;
  left: 0;
  bottom: 5px;
  display: flex;
  button {
    width: 12px;
    height: 12px;
    overflow: hidden;
    border: 1px solid #333;
    background: #d8d8d8;
  }
  svg {
    width: 10px;
    height: 10px;
  }
`;
const LeftPanel = styled.section`
  width: 155px;
  display: flex;
  flex-direction: column;
  padding: 0 0 0 4px;
`;
const PanelTitle = styled.div`
  height: 27px;
  display: flex;
  align-items: center;
  padding: 0 8px 0 39px;
  justify-content: space-between;
`;
const PartFrame = styled.div`
  flex: 1;
  min-height: 0;
  display: flex;
  flex-direction: column;
  padding: 1px 1px 2px;
  border: 1px solid #828790;
  background: #fff;
`;
const PartList = styled.ul`
  flex: 1;
  margin: 0;
  padding: 0 0 0 5px;
  list-style: none;
  overflow: hidden;
  white-space: nowrap;
`;
const Part = styled.li`
  display: flex;
  margin-left: 7px;
  background: linear-gradient(90deg, #999 1px, transparent 1px) 0 7px / 2px 1px repeat-x;
  border-left: 1px dotted #888;
  &:last-child {
    height: 8px;
  }
`;
const PartName = styled.span`
  flex: 1;
  margin-left: 8px;
  padding-left: 3px;
  background: ${(p) => (p.$active ? "#d9d9d9" : "#fff")};
`;
const BottomTabs = styled.div`
  height: 23px;
  display: flex;
  padding: 0 0 0 8px;
  ${dither}
`;
const BottomTab = styled.button`
  position: relative;
  z-index: ${(p) => (p.$active ? 1 : 2)};
  width: 48px;
  height: 18px;
  margin-right: -2px;
  &::before,
  &::after {
    content: "";
    position: absolute;
    inset: 0;
    background: #555;
    clip-path: polygon(0 0, 100% 0, calc(100% - 5px) 100%, 5px 100%);
  }
  &::after {
    inset: 0 1px 1px;
    background: ${(p) => (p.$active ? "#f0f0f0" : "#fff")};
  }
  span {
    position: relative;
    z-index: 1;
  }
`;
const VSplit = styled.div`
  width: 7px;
  display: flex;
  align-items: center;
`;
const VHandle = styled.div`
  width: 6px;
  height: 100px;
  border: 1px solid #888;
  background: #f6f6f6;
`;
const Center = styled.section`
  flex: 1;
  min-width: 0;
  display: flex;
  flex-direction: column;
`;
const GridFrame = styled.div`
  flex: 1;
  min-width: 0;
  min-height: 0;
  display: grid;
  grid-template: minmax(0, 1fr) 16px / minmax(0, 1fr) auto;
  padding: 1px;
  border: 1px solid #a0a0a0;
  background: #fff;
  ${(p) =>
    p.$tall &&
    css`
      flex: none;
      height: 286px;
    `}
`;
const GridView = styled.div`
  overflow: hidden;
`;
const HSpan = styled.div`
  grid-column: 1 / -1;
  grid-row: 2;
`;
const Table = styled.table`
  table-layout: fixed;
  width: 100px;
  border-collapse: separate;
  border-spacing: 0;
`;
const Th = styled.th`
  height: 21px;
  padding: 0;
  font-weight: 400;
  white-space: nowrap;
  border: solid ${line};
  border-width: 0 1px 1px 0;
  background: ${(p) =>
    p.$hot ? "linear-gradient(#fadba5, #f0c060)" : "linear-gradient(#f4f4f4, #ededed)"};
`;
const Tr = styled.tr`
  height: ${(p) => p.$h}px;
  background: ${(p) => (p.$blue ? "#a8dbfb" : "#fff")};
`;
const Td = styled.td`
  padding: ${(p) => (p.$center ? "0 0 0 2px" : "0 3px 0 2px")};
  border: solid ${line};
  border-width: 0 1px 1px 0;
  white-space: nowrap;
  overflow: hidden;
  text-align: ${(p) => (p.$right ? "right" : p.$center ? "center" : "left")};
`;
const RowHead = styled(Td)`
  ${mono}
  text-align: center;
  background: ${(p) => (p.$hot ? "#ffd48a" : "#f0f0f0")};
`;
const NumCell = styled(Td)`
  ${mono}
  text-align: right;
`;
const CodeCell = styled(Td)`
  ${mono}
  background: ${(p) => (p.$hot ? "#d9eaf9" : "none")};
`;
const CodeLine = styled.div`
  display: flex;
  align-items: center;
`;
const ToggleSlot = styled.span`
  width: 18px;
`;
const LeafCell = styled(Td)`
  ${mono}
  padding-left: 40px;
  background: linear-gradient(${line}, ${line}) 9px 0 / 1px 100% no-repeat,
    linear-gradient(${line}, ${line}) 19px 0 / 1px ${(p) => (p.$last ? "50%" : "100%")} no-repeat,
    linear-gradient(${line}, ${line}) 19px 50% / 16px 1px no-repeat;
`;
const Toggle = styled.span`
  display: inline-flex;
  align-items: center;
  justify-content: center;
  width: 13px;
  height: 13px;
  border: 1px solid #aaa;
  background: #fff;
  font-size: 14px;
  line-height: 11px;
`;
const ParentCell = styled(Td)`
  ${mono}
  padding-left: 13px;
  background: linear-gradient(#9bb, #9bb) 9px 0 / 1px 100% no-repeat,
    linear-gradient(#9bb, #9bb) 9px 50% / 5px 1px no-repeat,
    linear-gradient(#9bb, #9bb) 19px 100% / 1px 50% no-repeat;
  ${Toggle} {
    margin-right: 4px;
    vertical-align: middle;
  }
`;
const ScrollBar = styled.div`
  display: flex;
  flex: none;
  background: #f0f0f0;
  ${(p) => (p.$vertical ? "flex-direction: column; width: 16px;" : "height: 16px; min-width: 0;")}
`;
const ScrollEnd = styled.span`
  flex: none;
  display: flex;
  align-items: center;
  justify-content: center;
  ${(p) => (p.$vertical ? "height: 17px;" : "width: 17px;")}
`;
const Track = styled.div`
  flex: 1;
  min-width: 0;
  min-height: 0;
`;
const Thumb = styled.div`
  background: #cdcdcd;
  ${(p) =>
    p.$vertical
      ? `height: ${p.$len}px; margin-top: ${p.$at}px;`
      : `width: ${p.$len}px; height: 100%; margin-left: ${p.$at}px;`}
`;
const Corner = styled.div`
  background: #f0f0f0;
`;
const LowerBar = styled.div`
  height: 30px;
  display: flex;
  align-items: center;
  gap: 2px;
  padding: 7px 0 0 2px;
`;
const ModeButton = styled.button`
  height: 20px;
  min-width: 42px;
  padding: 0 6px;
  border: 1px solid transparent;
  ${(p) =>
    p.$pressed &&
    css`
      border-color: #777 #fff #fff #777;
      ${dither}
    `}
`;
const Lower = styled.div`
  flex: 1;
  min-height: 0;
  display: flex;
  margin-bottom: 2px;
`;
const Actions = styled.aside`
  width: 128px;
  padding: 5px 5px 0 7px;
`;
const ButtonGrid = styled.div`
  display: grid;
  grid-template-columns: 1fr 1fr;
  gap: 4px 6px;
  padding: 0 8px 0 4px;
`;
const PushButton = styled.button`
  height: 24px;
  border: 1px solid #adadad;
  background: #e1e1e1;
  ${(p) => p.$wide && "grid-column: 1 / -1;"}
`;
const Fieldset = styled.fieldset`
  height: 98px;
  margin: 4px 0 0;
  padding: 10px 0 0 0;
  border: 1px solid #dcdcdc;
  display: grid;
  grid-template-columns: 67px 1fr;
  align-content: start;
  row-gap: 9px;
  legend {
    margin-left: 5px;
    padding: 0 1px;
  }
`;
const RadioLabel = styled.label`
  display: flex;
  align-items: center;
  gap: 3px;
`;
const Radio = styled.input`
  appearance: none;
  width: 13px;
  height: 13px;
  margin: 0;
  border: 1px solid #333;
  border-radius: 50%;
  background: #fff;
  &:checked {
    background: radial-gradient(circle, #222 3px, #fff 4px);
  }
`;
const StatusBar = styled.footer`
  height: 20px;
  display: grid;
  grid-template-columns: 384fr 383fr 231fr 202fr 166fr;
  gap: 2px;
  span {
    min-width: 0;
    overflow: hidden;
    padding: 2px 1px;
    border: 1px solid #d4d4d4;
    background: linear-gradient(#fff, #f0f0f0);
    white-space: nowrap;
  }
`;

const Dialog = styled.section`
  position: absolute;
  z-index: 50;
  left: 282px;
  top: 112px;
  width: 853px;
  height: 514px;
  display: flex;
  flex-direction: column;
  border: 1px solid #2b8ae8;
  background: #f0f0f0;
  box-shadow: 0 8px 22px rgba(0, 0, 0, 0.4);
`;
const DialogTitle = styled.div`
  height: 30px;
  display: flex;
  align-items: center;
  padding-left: 8px;
  background: #fff;
  span {
    padding-left: 5px;
  }
`;
const DialogBar = styled.div`
  height: 28px;
  display: flex;
  align-items: center;
  gap: 2px;
  overflow: hidden;
  ${ModeButton} {
    margin-bottom: 8px;
  }
  ${Sep} {
    margin-bottom: 8px;
  }
`;
const GreyButton = styled.button`
  align-self: flex-end;
  width: 73px;
  height: 23px;
  margin-left: 2px;
  border: 1px solid #bfbfbf;
  background: #ccc;
  color: #838383;
  &:last-child {
    width: 70px;
  }
`;
const DialogBody = styled.div`
  flex: 1;
  min-height: 0;
  display: flex;
  gap: 4px;
`;
const DialogLeft = styled.div`
  width: 215px;
  display: flex;
  flex-direction: column;
`;
const SelectWrap = styled.div`
  position: relative;
  height: 20px;
  svg {
    position: absolute;
    right: 4px;
    top: 5px;
  }
`;
const Select = styled.select`
  appearance: none;
  width: 100%;
  height: 20px;
  padding: 0 16px 0 3px;
  border: 1px solid #adadad;
  border-radius: 0;
  background: #e1e1e1;
`;
const PageTabs = styled.div`
  height: 22px;
  display: flex;
  align-items: flex-end;
`;
const PageTab = styled.button`
  height: ${(p) => (p.$active ? 20 : 18)}px;
  padding: 0 ${(p) => (p.$active ? 7 : 3)}px;
  border: 1px solid #d9d9d9;
  border-bottom: none;
  background: ${(p) => (p.$active ? "#fff" : "#f0f0f0")};
`;
const TreePage = styled.div`
  flex: 1;
  min-height: 0;
  display: flex;
  padding: 3px 3px 4px 4px;
  background: #fff;
`;
const TreeFrame = styled.div`
  flex: 1;
  min-width: 0;
  display: grid;
  grid-template: minmax(0, 1fr) 16px / minmax(0, 1fr) auto;
  padding: 1px;
  border: 1px solid #828790;
`;
const ChapterList = styled.ul`
  margin: 0;
  padding: 0 0 0 6px;
  list-style: none;
  overflow: hidden;
`;
const Chapter = styled.li`
  height: 16px;
  display: flex;
  align-items: center;
  white-space: nowrap;
  padding-left: ${(p) => [0, 19, 43][p.$level]}px;
  background: ${(p) =>
    p.$level > 0 &&
    "repeating-linear-gradient(#999 0 1px, transparent 1px 2px) 5px 0 / 1px 100% no-repeat"}
    ${(p) =>
      p.$level > 1 &&
      ", repeating-linear-gradient(#999 0 1px, transparent 1px 2px) 24px 0 / 1px 100% no-repeat, repeating-linear-gradient(#999 0 1px, transparent 1px 2px) 43px 0 / 1px 100% no-repeat"};
`;
const Dots = styled.i`
  width: ${(p) => (p.$leaf ? 8 : 3)}px;
  height: 1px;
  background: repeating-linear-gradient(90deg, transparent 0 1px, #888 1px 2px);
`;
const ChapterName = styled.span`
  margin-left: 1px;
  padding: 1px 2px 1px 3px;
  background: ${(p) => (p.$active ? "#cce8ff" : "none")};
`;
const DialogRight = styled.div`
  flex: 1;
  min-width: 0;
  display: flex;
  flex-direction: column;
`;
const ItemArea = styled.div`
  height: 244px;
  border: 1px solid #a0a0a0;
  background: #fff;
`;
const HSplit = styled.div`
  height: 14px;
  display: flex;
  align-items: center;
  justify-content: center;
`;
const HHandle = styled.div`
  width: 100px;
  height: 8px;
  display: flex;
  align-items: center;
  justify-content: space-evenly;
  border: 1px solid #808080;
  b {
    width: 68px;
    height: 1px;
    background: repeating-linear-gradient(90deg, #00007f 0 1px, transparent 1px 3px);
  }
  i {
    border: 3px solid transparent;
    border-bottom: none;
    border-top-color: #00007f;
  }
`;
const NoteRow = styled.div`
  flex: 1;
  min-height: 0;
  display: flex;
  gap: 4px;
`;
const NoteCol = styled.div`
  flex: ${(p) => (p.$wide ? 369 : 259)} 1 0;
  min-width: 0;
  display: flex;
  flex-direction: column;
  padding: 1px 0 0;
  border-top: 1px solid #fff;
  label {
    height: 16px;
  }
`;
const NoteBox = styled.div`
  flex: 1;
  min-height: 0;
  display: flex;
  padding: 1px;
  border: solid #777;
  border-width: 1px 1px 2px;
  background: #fff;
`;
const Note = styled.textarea`
  flex: 1;
  min-width: 0;
  margin: 0;
  padding: 1px 2px;
  border: none;
  outline: none;
  resize: none;
  overflow: hidden;
  line-height: 12px;
  white-space: ${(p) => (p.$pre ? "pre" : "pre-wrap")};
`;
const Mark = styled.div`
  position: absolute;
  border: 3px solid #f00;
  pointer-events: none;
`;
const MarkTree = styled(Mark)`
  left: 44px;
  top: 308px;
  width: 143px;
  height: 34px;
`;
const MarkRow = styled(Mark)`
  left: 211px;
  top: 95px;
  width: 377px;
  height: 29px;
`;

const Ime = styled.div`
  position: absolute;
  z-index: 60;
  left: 701px;
  top: 0;
  display: flex;
  align-items: center;
  gap: 6px;
  height: 28px;
  padding-right: 2px;
  background: linear-gradient(#b5cbe0, #b5cbe0) 100% 3px / 1px 24px no-repeat,
    linear-gradient(#b5cbe0, #b5cbe0) 14px 3px / 100% 1px no-repeat,
    linear-gradient(#b5cbe0, #b5cbe0) 14px 26px / 100% 1px no-repeat,
    linear-gradient(#fff, #fff) 14px 4px / 100% 22px no-repeat;
  strong {
    color: #1b73c9;
    font-size: 16px;
  }
`;
const Ball = styled.div`
  position: absolute;
  z-index: 60;
  left: 1076px;
  top: -28px;
  width: 46px;
  height: 46px;
  padding-top: 26px;
  border: 2px solid #b5b5b5;
  border-radius: 50%;
  background: linear-gradient(#5cd070 60%, #2fb04c);
  box-shadow: 0 3px 8px rgba(0, 0, 0, 0.35);
  color: #fff;
  font-weight: 700;
  text-align: center;
`;

const Tasks = styled.footer`
  height: 40px;
  display: flex;
  background: #000c10;
  color: #fff;
`;
const StartButton = styled.button`
  width: 48px;
  display: flex;
  align-items: center;
  justify-content: center;
  background: #000;
`;
const Search = styled.label`
  width: 344px;
  display: flex;
  align-items: center;
  gap: 6px;
  padding: 0 12px 0 8px;
  background: #333;
  input {
    flex: 1;
    min-width: 0;
    padding: 0;
    border: none;
    outline: none;
    background: none;
    font-size: 14px;
    line-height: 20px;
  }
  input::placeholder {
    color: #9a9a9a;
  }
`;
const TaskGroup = styled.div`
  display: flex;
  gap: ${(p) => (p.$loose ? 2 : 0)}px;
  margin-right: ${(p) => (p.$loose ? 7 : 0)}px;
`;
const Task = styled.button`
  width: 48px;
  display: flex;
  align-items: center;
  justify-content: center;
  border-bottom: 3px solid ${(p) => (p.$open ? "#76b9ed" : "transparent")};
  border-top: 3px solid transparent;
  background: ${(p) => (p.$active ? "#3b4245" : "none")};
`;
const TrayText = styled.div`
  align-self: center;
  padding: 0 ${(p) => (p.$two ? 18 : p.$clock ? 10 : 2)}px;
  text-align: center;
  line-height: 18px;
`;
const Tray = styled.div`
  display: flex;
  align-items: center;
  gap: 9px;
  padding-right: 8px;
`;
const Notice = styled.div`
  position: relative;
  width: 50px;
  display: flex;
  align-items: center;
  justify-content: center;
  padding-right: 12px;
  background: #000;
  em {
    position: absolute;
    left: 20px;
    top: 17px;
    width: 17px;
    height: 17px;
    border: 1px solid #888;
    border-radius: 50%;
    background: #333;
    font-style: normal;
    line-height: 15px;
    text-align: center;
  }
`;
